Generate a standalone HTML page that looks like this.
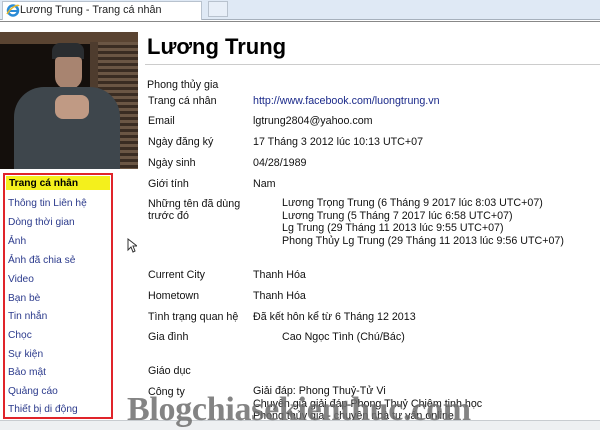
<!DOCTYPE html>
<html><head><meta charset="utf-8"><style>
*{margin:0;padding:0;box-sizing:border-box}
body{width:600px;height:430px;overflow:hidden;background:#fff;font-family:"Liberation Sans",Arial,sans-serif;font-size:10.7px;color:#111;position:relative}
.a{position:absolute;white-space:nowrap;line-height:14px}
.nav{position:absolute;left:8px;color:#2b3a8c;font-size:10.2px;line-height:14px}
</style></head><body>
<div class="a" style="left:0;top:0;width:600px;height:20px;background:#dfe9f5;border-bottom:1px solid #a6b0bc"></div>
<div class="a" style="left:2px;top:1px;width:200px;height:19px;background:#fff;border:1px solid #b8c2ce;border-bottom:none"></div>
<div class="a" style="left:208px;top:1px;width:20px;height:16px;background:#e8eff8;border:1px solid #b8c2ce"></div>
<svg class="a" style="left:6px;top:3px" width="14" height="14" viewBox="0 0 14 14"><circle cx="7" cy="7.5" r="5" fill="none" stroke="#2a8bd6" stroke-width="2.5"/><path d="M3 8h8" stroke="#2a8bd6" stroke-width="2"/><path d="M1 11C5 4 12 1 13 3" stroke="#e8b92a" stroke-width="1.5" fill="none"/></svg>
<div class="a" style="left:20px;top:3px;font-size:10.8px;color:#222">Lương Trung - Trang cá nhân</div>
<div class="a" style="left:0;top:21px;width:600px;height:1px;background:#888"></div>
<!-- photo -->
<div class="a" style="left:0;top:32px;width:138px;height:137px;background:#140f0c;overflow:hidden">
 <div class="a" style="left:0;top:0;width:138px;height:12px;background:#5a4432"></div>
 <div class="a" style="left:96px;top:10px;width:42px;height:127px;background:repeating-linear-gradient(#6b5644 0 3px,#3a2c22 3px 6px)"></div>
 <div class="a" style="left:90px;top:10px;width:8px;height:127px;background:#4e3c2e"></div>
 <div class="a" style="left:52px;top:11px;width:32px;height:16px;background:#2a2d30;border-radius:8px 8px 0 0"></div>
 <div class="a" style="left:55px;top:25px;width:27px;height:32px;background:#a88470;border-radius:4px 4px 12px 12px"></div>
 <div class="a" style="left:14px;top:55px;width:106px;height:90px;background:#3e464c;border-radius:30px 30px 0 0"></div>
 <div class="a" style="left:55px;top:63px;width:34px;height:24px;background:#c09a84;border-radius:8px"></div>
</div>
<div class="a" style="left:147px;top:34px;font-size:22px;font-weight:bold;line-height:26px;color:#000">Lương Trung</div>
<div class="a" style="left:145px;top:64px;width:455px;height:1px;background:#ccc"></div>
<div class="a" style="left:147px;top:78px">Phong thủy gia</div>
<div class="a" style="left:148px;top:94px">Trang cá nhân</div><div class="a" style="left:253px;top:94px;color:#1b2a8a">http://www.facebook.com/luongtrung.vn</div>
<div class="a" style="left:148px;top:114px">Email</div><div class="a" style="left:253px;top:114px">lgtrung2804@yahoo.com</div>
<div class="a" style="left:148px;top:135px">Ngày đăng ký</div><div class="a" style="left:253px;top:135px">17 Tháng 3 2012 lúc 10:13 UTC+07</div>
<div class="a" style="left:148px;top:156px">Ngày sinh</div><div class="a" style="left:253px;top:156px">04/28/1989</div>
<div class="a" style="left:148px;top:177px">Giới tính</div><div class="a" style="left:253px;top:177px">Nam</div>
<div class="a" style="left:148px;top:198px;line-height:12px">Những tên đã dùng<br>trước đó</div>
<div class="a" style="left:282px;top:197px;line-height:12.5px">Lương Trọng Trung (6 Tháng 9 2017 lúc 8:03 UTC+07)<br>Lương Trung (5 Tháng 7 2017 lúc 6:58 UTC+07)<br>Lg Trung (29 Tháng 11 2013 lúc 9:55 UTC+07)<br>Phong Thủy Lg Trung (29 Tháng 11 2013 lúc 9:56 UTC+07)</div>
<div class="a" style="left:148px;top:268px">Current City</div><div class="a" style="left:253px;top:268px">Thanh Hóa</div>
<div class="a" style="left:148px;top:289px">Hometown</div><div class="a" style="left:253px;top:289px">Thanh Hóa</div>
<div class="a" style="left:148px;top:310px">Tình trạng quan hệ</div><div class="a" style="left:253px;top:310px">Đã kết hôn kể từ 6 Tháng 12 2013</div>
<div class="a" style="left:148px;top:330px">Gia đình</div><div class="a" style="left:282px;top:330px">Cao Ngọc Tình (Chú/Bác)</div>
<div class="a" style="left:148px;top:364px">Giáo dục</div>
<div class="a" style="left:148px;top:385px">Công ty</div>
<div class="a" style="left:253px;top:385px;line-height:12.5px">Giải đáp: Phong Thuỷ-Tử Vi<br>Chuyên gia giải đáp Phong Thuỷ Chiêm tinh học<br>Phong thủy gia - chuyên nhà tư vấn online</div>
<svg class="a" style="left:127px;top:238px" width="10" height="15" viewBox="0 0 10 15"><path d="M1 1v11l3-3 2 5 2-1-2-5h4z" fill="#fff" stroke="#333" stroke-width="1"/></svg>
<!-- sidebar -->
<div class="a" style="left:3px;top:173px;width:110px;height:246px;border:2px solid #e0242a"></div>
<div class="a" style="left:6px;top:176px;width:104px;height:14px;background:#f4f01c"></div>
<div class="nav" style="top:177px;color:#000;font-weight:bold;left:9px">Trang cá nhân</div>
<div class="nav" style="top:197px">Thông tin Liên hệ</div>
<div class="nav" style="top:216px">Dòng thời gian</div>
<div class="nav" style="top:235px">Ảnh</div>
<div class="nav" style="top:254px">Ảnh đã chia sẻ</div>
<div class="nav" style="top:273px">Video</div>
<div class="nav" style="top:292px">Bạn bè</div>
<div class="nav" style="top:310px">Tin nhắn</div>
<div class="nav" style="top:329px">Chọc</div>
<div class="nav" style="top:348px">Sự kiện</div>
<div class="nav" style="top:366px">Bảo mật</div>
<div class="nav" style="top:385px">Quảng cáo</div>
<div class="nav" style="top:403px">Thiết bị di động</div>
<div class="a" style="left:0;top:420px;width:600px;height:10px;background:#eef0f2;border-top:1px solid #c8ccd0"></div>
<div class="a" style="left:127px;top:390px;font-family:'Liberation Serif',serif;font-weight:bold;font-size:34px;line-height:40px;color:rgba(110,110,110,0.85);letter-spacing:-0.3px">Blogchiasekienthuc.com</div>
</body></html>
